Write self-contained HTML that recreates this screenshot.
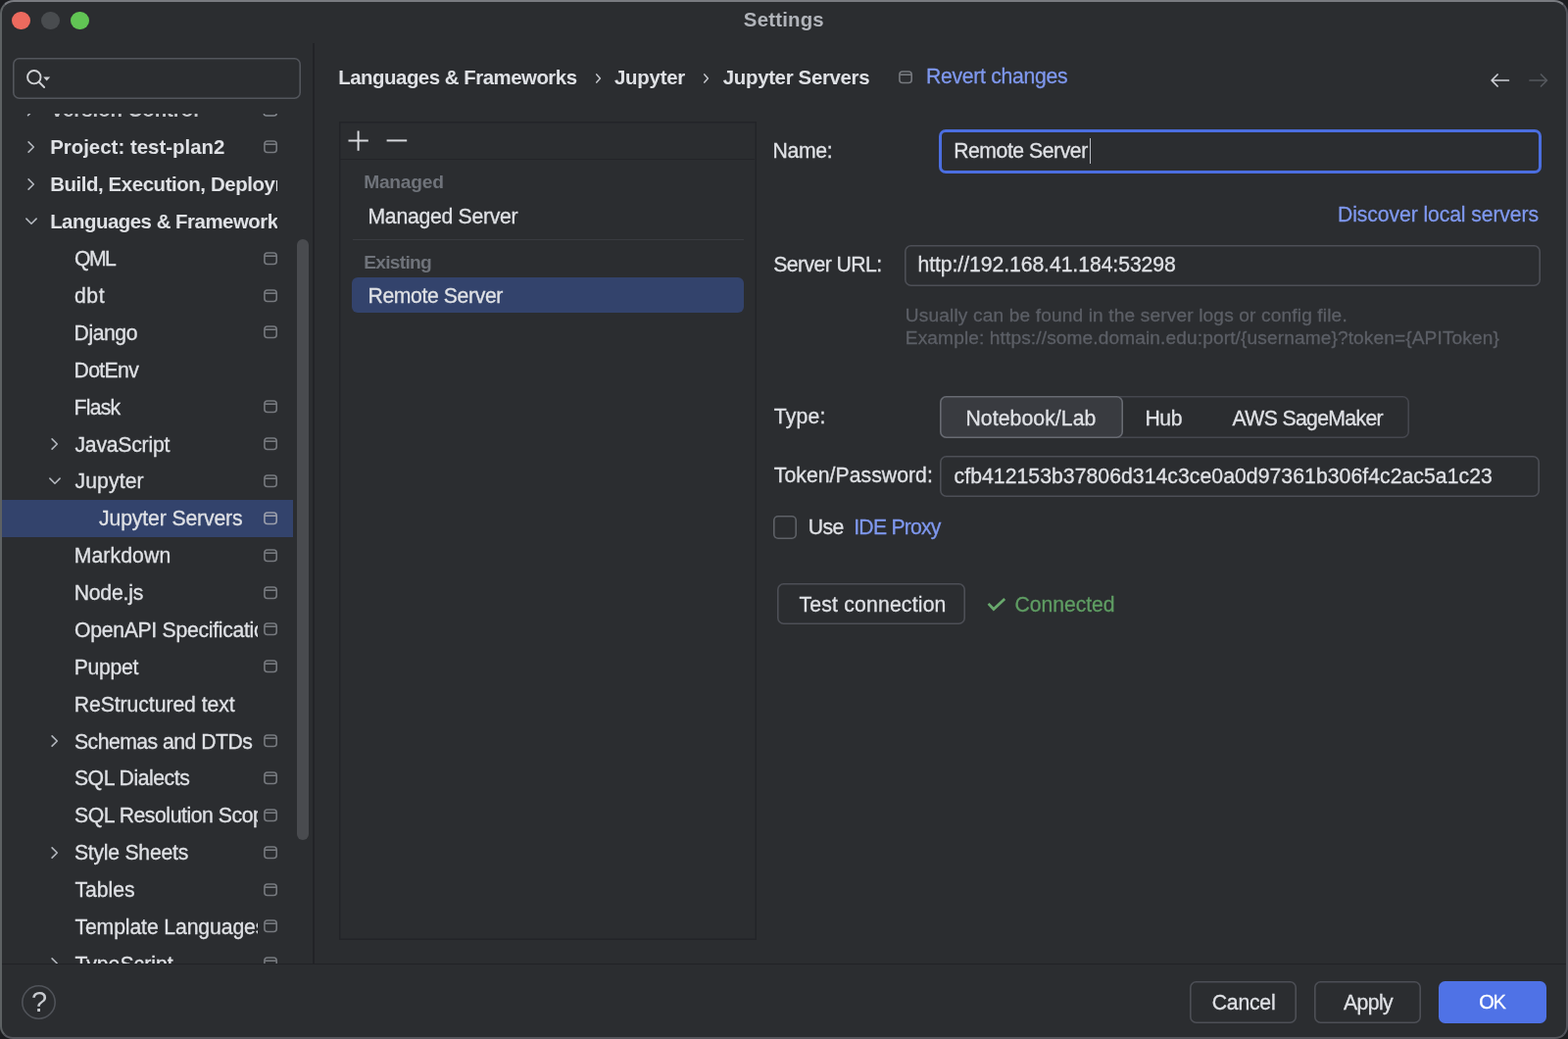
<!DOCTYPE html>
<html lang="en"><head><meta charset="utf-8"><title>Settings</title>
<style>
html,body{margin:0;padding:0;}
body{width:1600px;height:1060px;overflow:hidden;background:#1c1d20;font-family:"Liberation Sans",sans-serif;position:relative;}
.win{position:absolute;left:0;top:0;width:1600px;height:1060px;box-sizing:border-box;background:#2b2d30;border:2px solid #5d6163;border-top-color:#797b80;border-right-color:#52535b;border-bottom-color:#55565c;border-radius:14px 14px 13px 13px;overflow:hidden;}
.abs{position:absolute;box-sizing:border-box;}
.t{position:absolute;white-space:nowrap;line-height:30px;height:30px;display:block;}
.tl{position:absolute;left:0;top:0;width:1600px;height:1060px;will-change:transform;}
.pi{position:absolute;overflow:visible;}
.dot{position:absolute;width:18.8px;height:18.8px;border-radius:50%;top:11.6px;}
.inp{position:absolute;box-sizing:border-box;border-radius:6.5px;background:#2b2d30;box-shadow:inset 0 0 0 1.6px var(--bc,#4d4f56);}
.btn{position:absolute;box-sizing:border-box;border-radius:6.5px;box-shadow:inset 0 0 0 1.6px #4d4f56;}
</style></head>
<body>
<div class="win"></div>
<!-- sidebar bg -->
<div class="abs" style="left:2px;top:44px;width:319px;height:939px;background:#2b2d30"></div>
<!-- traffic lights -->
<div class="dot" style="left:11.9px;background:#ec6a5e"></div>
<div class="dot" style="left:42px;background:#494c4f"></div>
<div class="dot" style="left:72.2px;background:#61c554"></div>
<!-- search -->
<div class="inp" style="left:12.5px;top:59.3px;width:294.7px;height:41.5px;--bc:#53565c"></div>
<svg class="pi" style="left:24px;top:68px" width="32" height="24" viewBox="0 0 32 24"><circle cx="10.8" cy="10.7" r="6.7" fill="none" stroke="#d0d2d5" stroke-width="1.9"/><path d="M15.6 15.5L21.1 21" stroke="#d0d2d5" stroke-width="1.9" stroke-linecap="round"/><path d="M20.2 10.5h7l-3.5 4.1z" fill="#d0d2d5"/></svg>
<!-- selected tree row -->
<div class="abs" style="left:2px;top:510px;width:296.5px;height:38px;background:#33436c"></div>
<!-- clipped Version Control row -->
<div class="abs" style="left:2px;top:115.8px;width:300px;height:7px;overflow:hidden;will-change:transform">
 <span class="t" style="left:49.6px;top:-18.54px;font-size:20.4px;font-weight:bold;letter-spacing:-0.04px;color:#c5c7cb">Version Control</span>
 <svg class="pi" style="left:266px;top:-10.24px" width="16" height="14" viewBox="0 0 16 14"><rect x="1.25" y="1.25" width="13" height="10.8" rx="2.6" fill="none" stroke="#868a91" stroke-width="1.5"/></svg>
 <svg class="pi" style="left:24.9px;top:-10.54px" width="10" height="14" viewBox="0 0 10 14"><path d="M1.6 1.4L7.6 7L1.6 12.6" fill="none" stroke="#b4b8bf" stroke-width="1.6" stroke-linecap="round" stroke-linejoin="round"/></svg>
</div>
<svg class="pi" style="left:268px;top:143.13px" width="16" height="14" viewBox="0 0 16 14"><rect x="1.9" y="1.05" width="12.3" height="11.4" rx="3" fill="none" stroke="#76797e" stroke-width="1.6"/><path d="M2.2 4.2H13.9" stroke="#76797e" stroke-width="1.6" fill="none"/></svg>
<svg class="pi" style="left:26.9px;top:143.13px" width="10" height="14" viewBox="0 0 10 14"><path d="M2.1 1.9L7.3 7L2.1 12.1" fill="none" stroke="#b4b8bf" stroke-width="1.6" stroke-linecap="round" stroke-linejoin="round"/></svg>
<svg class="pi" style="left:26.9px;top:181.0px" width="10" height="14" viewBox="0 0 10 14"><path d="M2.1 1.9L7.3 7L2.1 12.1" fill="none" stroke="#b4b8bf" stroke-width="1.6" stroke-linecap="round" stroke-linejoin="round"/></svg>
<svg class="pi" style="left:24.5px;top:221.28px" width="14" height="10" viewBox="0 0 14 10"><path d="M1.9 2.1L7 7.3L12.1 2.1" fill="none" stroke="#b4b8bf" stroke-width="1.6" stroke-linecap="round" stroke-linejoin="round"/></svg>
<svg class="pi" style="left:268px;top:256.74px" width="16" height="14" viewBox="0 0 16 14"><rect x="1.9" y="1.05" width="12.3" height="11.4" rx="3" fill="none" stroke="#76797e" stroke-width="1.6"/><path d="M2.2 4.2H13.9" stroke="#76797e" stroke-width="1.6" fill="none"/></svg>
<svg class="pi" style="left:268px;top:294.61px" width="16" height="14" viewBox="0 0 16 14"><rect x="1.9" y="1.05" width="12.3" height="11.4" rx="3" fill="none" stroke="#76797e" stroke-width="1.6"/><path d="M2.2 4.2H13.9" stroke="#76797e" stroke-width="1.6" fill="none"/></svg>
<svg class="pi" style="left:268px;top:332.48px" width="16" height="14" viewBox="0 0 16 14"><rect x="1.9" y="1.05" width="12.3" height="11.4" rx="3" fill="none" stroke="#76797e" stroke-width="1.6"/><path d="M2.2 4.2H13.9" stroke="#76797e" stroke-width="1.6" fill="none"/></svg>
<svg class="pi" style="left:268px;top:408.22px" width="16" height="14" viewBox="0 0 16 14"><rect x="1.9" y="1.05" width="12.3" height="11.4" rx="3" fill="none" stroke="#76797e" stroke-width="1.6"/><path d="M2.2 4.2H13.9" stroke="#76797e" stroke-width="1.6" fill="none"/></svg>
<svg class="pi" style="left:268px;top:446.09px" width="16" height="14" viewBox="0 0 16 14"><rect x="1.9" y="1.05" width="12.3" height="11.4" rx="3" fill="none" stroke="#76797e" stroke-width="1.6"/><path d="M2.2 4.2H13.9" stroke="#76797e" stroke-width="1.6" fill="none"/></svg>
<svg class="pi" style="left:50.9px;top:446.09px" width="10" height="14" viewBox="0 0 10 14"><path d="M2.1 1.9L7.3 7L2.1 12.1" fill="none" stroke="#b4b8bf" stroke-width="1.6" stroke-linecap="round" stroke-linejoin="round"/></svg>
<svg class="pi" style="left:268px;top:483.96px" width="16" height="14" viewBox="0 0 16 14"><rect x="1.9" y="1.05" width="12.3" height="11.4" rx="3" fill="none" stroke="#76797e" stroke-width="1.6"/><path d="M2.2 4.2H13.9" stroke="#76797e" stroke-width="1.6" fill="none"/></svg>
<svg class="pi" style="left:48.5px;top:486.36px" width="14" height="10" viewBox="0 0 14 10"><path d="M1.9 2.1L7 7.3L12.1 2.1" fill="none" stroke="#b4b8bf" stroke-width="1.6" stroke-linecap="round" stroke-linejoin="round"/></svg>
<svg class="pi" style="left:268px;top:521.83px" width="16" height="14" viewBox="0 0 16 14"><rect x="1.9" y="1.05" width="12.3" height="11.4" rx="3" fill="none" stroke="#9a9eab" stroke-width="1.6"/><path d="M2.2 4.2H13.9" stroke="#9a9eab" stroke-width="1.6" fill="none"/></svg>
<svg class="pi" style="left:268px;top:559.7px" width="16" height="14" viewBox="0 0 16 14"><rect x="1.9" y="1.05" width="12.3" height="11.4" rx="3" fill="none" stroke="#76797e" stroke-width="1.6"/><path d="M2.2 4.2H13.9" stroke="#76797e" stroke-width="1.6" fill="none"/></svg>
<svg class="pi" style="left:268px;top:597.57px" width="16" height="14" viewBox="0 0 16 14"><rect x="1.9" y="1.05" width="12.3" height="11.4" rx="3" fill="none" stroke="#76797e" stroke-width="1.6"/><path d="M2.2 4.2H13.9" stroke="#76797e" stroke-width="1.6" fill="none"/></svg>
<svg class="pi" style="left:268px;top:635.44px" width="16" height="14" viewBox="0 0 16 14"><rect x="1.9" y="1.05" width="12.3" height="11.4" rx="3" fill="none" stroke="#76797e" stroke-width="1.6"/><path d="M2.2 4.2H13.9" stroke="#76797e" stroke-width="1.6" fill="none"/></svg>
<svg class="pi" style="left:268px;top:673.31px" width="16" height="14" viewBox="0 0 16 14"><rect x="1.9" y="1.05" width="12.3" height="11.4" rx="3" fill="none" stroke="#76797e" stroke-width="1.6"/><path d="M2.2 4.2H13.9" stroke="#76797e" stroke-width="1.6" fill="none"/></svg>
<svg class="pi" style="left:268px;top:749.05px" width="16" height="14" viewBox="0 0 16 14"><rect x="1.9" y="1.05" width="12.3" height="11.4" rx="3" fill="none" stroke="#76797e" stroke-width="1.6"/><path d="M2.2 4.2H13.9" stroke="#76797e" stroke-width="1.6" fill="none"/></svg>
<svg class="pi" style="left:50.9px;top:749.05px" width="10" height="14" viewBox="0 0 10 14"><path d="M2.1 1.9L7.3 7L2.1 12.1" fill="none" stroke="#b4b8bf" stroke-width="1.6" stroke-linecap="round" stroke-linejoin="round"/></svg>
<svg class="pi" style="left:268px;top:786.92px" width="16" height="14" viewBox="0 0 16 14"><rect x="1.9" y="1.05" width="12.3" height="11.4" rx="3" fill="none" stroke="#76797e" stroke-width="1.6"/><path d="M2.2 4.2H13.9" stroke="#76797e" stroke-width="1.6" fill="none"/></svg>
<svg class="pi" style="left:268px;top:824.79px" width="16" height="14" viewBox="0 0 16 14"><rect x="1.9" y="1.05" width="12.3" height="11.4" rx="3" fill="none" stroke="#76797e" stroke-width="1.6"/><path d="M2.2 4.2H13.9" stroke="#76797e" stroke-width="1.6" fill="none"/></svg>
<svg class="pi" style="left:268px;top:862.66px" width="16" height="14" viewBox="0 0 16 14"><rect x="1.9" y="1.05" width="12.3" height="11.4" rx="3" fill="none" stroke="#76797e" stroke-width="1.6"/><path d="M2.2 4.2H13.9" stroke="#76797e" stroke-width="1.6" fill="none"/></svg>
<svg class="pi" style="left:50.9px;top:862.66px" width="10" height="14" viewBox="0 0 10 14"><path d="M2.1 1.9L7.3 7L2.1 12.1" fill="none" stroke="#b4b8bf" stroke-width="1.6" stroke-linecap="round" stroke-linejoin="round"/></svg>
<svg class="pi" style="left:268px;top:900.53px" width="16" height="14" viewBox="0 0 16 14"><rect x="1.9" y="1.05" width="12.3" height="11.4" rx="3" fill="none" stroke="#76797e" stroke-width="1.6"/><path d="M2.2 4.2H13.9" stroke="#76797e" stroke-width="1.6" fill="none"/></svg>
<svg class="pi" style="left:268px;top:938.4px" width="16" height="14" viewBox="0 0 16 14"><rect x="1.9" y="1.05" width="12.3" height="11.4" rx="3" fill="none" stroke="#76797e" stroke-width="1.6"/><path d="M2.2 4.2H13.9" stroke="#76797e" stroke-width="1.6" fill="none"/></svg>
<svg class="pi" style="left:268px;top:976.27px" width="16" height="14" viewBox="0 0 16 14"><rect x="1.9" y="1.05" width="12.3" height="11.4" rx="3" fill="none" stroke="#76797e" stroke-width="1.6"/><path d="M2.2 4.2H13.9" stroke="#76797e" stroke-width="1.6" fill="none"/></svg>
<svg class="pi" style="left:50.9px;top:976.27px" width="10" height="14" viewBox="0 0 10 14"><path d="M2.1 1.9L7.3 7L2.1 12.1" fill="none" stroke="#b4b8bf" stroke-width="1.6" stroke-linecap="round" stroke-linejoin="round"/></svg>
<div class="tl">
<span class="t" id="t0" style="left:51.15px;top:135px;font-size:20.4px;color:#dfe1e5;font-weight:bold;letter-spacing:0.017px;">Project: test-plan2</span>
<span class="t" id="t1" style="left:51.15px;top:173px;font-size:20.4px;color:#dfe1e5;font-weight:bold;letter-spacing:-0.407px;width:232.05px;overflow:hidden;">Build, Execution, Deployment</span>
<span class="t" id="t2" style="left:51.15px;top:211px;font-size:20.4px;color:#dfe1e5;font-weight:bold;letter-spacing:-0.479px;width:232.05px;overflow:hidden;">Languages &amp; Frameworks</span>
<span class="t" id="t3" style="left:75.95px;top:249px;font-size:21.2px;color:#dfe1e5;-webkit-text-stroke:0.3px;letter-spacing:-1.475px;">QML</span>
<span class="t" id="t4" style="left:75.95px;top:287px;font-size:21.2px;color:#dfe1e5;-webkit-text-stroke:0.3px;letter-spacing:0.625px;">dbt</span>
<span class="t" id="t5" style="left:75.6px;top:325px;font-size:21.2px;color:#dfe1e5;-webkit-text-stroke:0.3px;letter-spacing:-0.46px;">Django</span>
<span class="t" id="t6" style="left:75.6px;top:363px;font-size:21.2px;color:#dfe1e5;-webkit-text-stroke:0.3px;letter-spacing:-0.66px;">DotEnv</span>
<span class="t" id="t7" style="left:75.6px;top:401px;font-size:21.2px;color:#dfe1e5;-webkit-text-stroke:0.3px;letter-spacing:-0.762px;">Flask</span>
<span class="t" id="t8" style="left:76.45px;top:439px;font-size:21.2px;color:#dfe1e5;-webkit-text-stroke:0.3px;letter-spacing:-0.217px;">JavaScript</span>
<span class="t" id="t9" style="left:76.45px;top:476px;font-size:21.2px;color:#dfe1e5;-webkit-text-stroke:0.3px;letter-spacing:0.117px;">Jupyter</span>
<span class="t" id="t10" style="left:101.05px;top:514px;font-size:21.2px;color:#dfe1e5;-webkit-text-stroke:0.3px;letter-spacing:-0.129px;">Jupyter Servers</span>
<span class="t" id="t11" style="left:75.7px;top:552px;font-size:21.2px;color:#dfe1e5;-webkit-text-stroke:0.3px;letter-spacing:0.114px;">Markdown</span>
<span class="t" id="t12" style="left:75.7px;top:590px;font-size:21.2px;color:#dfe1e5;-webkit-text-stroke:0.3px;letter-spacing:-0.208px;">Node.js</span>
<span class="t" id="t13" style="left:75.95px;top:628px;font-size:21.2px;color:#dfe1e5;-webkit-text-stroke:0.3px;letter-spacing:-0.283px;width:187.45px;overflow:hidden;">OpenAPI Specifications</span>
<span class="t" id="t14" style="left:75.7px;top:666px;font-size:21.2px;color:#dfe1e5;-webkit-text-stroke:0.3px;letter-spacing:-0.27px;">Puppet</span>
<span class="t" id="t15" style="left:75.7px;top:704px;font-size:21.2px;color:#dfe1e5;-webkit-text-stroke:0.3px;letter-spacing:-0.056px;">ReStructured text</span>
<span class="t" id="t16" style="left:75.95px;top:742px;font-size:21.2px;color:#dfe1e5;-webkit-text-stroke:0.3px;letter-spacing:-0.517px;">Schemas and DTDs</span>
<span class="t" id="t17" style="left:75.95px;top:779px;font-size:21.2px;color:#dfe1e5;-webkit-text-stroke:0.3px;letter-spacing:-0.455px;">SQL Dialects</span>
<span class="t" id="t18" style="left:75.95px;top:817px;font-size:21.2px;color:#dfe1e5;-webkit-text-stroke:0.3px;letter-spacing:-0.441px;width:187.45px;overflow:hidden;">SQL Resolution Scopes</span>
<span class="t" id="t19" style="left:75.95px;top:855px;font-size:21.2px;color:#dfe1e5;-webkit-text-stroke:0.3px;letter-spacing:-0.241px;">Style Sheets</span>
<span class="t" id="t20" style="left:76.45px;top:893px;font-size:21.2px;color:#dfe1e5;-webkit-text-stroke:0.3px;letter-spacing:-0.02px;">Tables</span>
<span class="t" id="t21" style="left:76.45px;top:931px;font-size:21.2px;color:#dfe1e5;-webkit-text-stroke:0.3px;letter-spacing:-0.106px;width:186.95px;overflow:hidden;">Template Languages</span>
<span class="t" id="t22" style="left:76.45px;top:969px;font-size:21.2px;color:#dfe1e5;-webkit-text-stroke:0.3px;letter-spacing:0.006px;">TypeScript</span>
</div>
<div class="abs" style="left:2px;top:982.7px;width:319px;height:22px;background:#2b2d30"></div>
<!-- scrollbar -->
<div class="abs" style="left:303px;top:244px;width:12px;height:613px;border-radius:6px;background:#494b4f"></div>
<!-- sidebar divider -->
<div class="abs" style="left:319.4px;top:44px;width:1.5px;height:939.5px;background:#222327"></div>
<!-- breadcrumb chevrons -->
<svg class="pi" style="left:606.8px;top:74.1px" width="8" height="12" viewBox="0 0 8 12"><path d="M1.8 1.9L5.4 6L1.8 10.1" fill="none" stroke="#c3c6cb" stroke-width="1.5" stroke-linecap="round" stroke-linejoin="round"/></svg>
<svg class="pi" style="left:717.4px;top:74.1px" width="8" height="12" viewBox="0 0 8 12"><path d="M1.8 1.9L5.4 6L1.8 10.1" fill="none" stroke="#c3c6cb" stroke-width="1.5" stroke-linecap="round" stroke-linejoin="round"/></svg>
<svg class="pi" style="left:915.9px;top:72.05px" width="16" height="14" viewBox="0 0 16 14"><rect x="1.9" y="1.05" width="12.3" height="11.4" rx="3" fill="none" stroke="#76797e" stroke-width="1.6"/><path d="M2.2 4.2H13.9" stroke="#76797e" stroke-width="1.6" fill="none"/></svg>
<!-- nav arrows -->
<svg class="pi" style="left:1519px;top:72px" width="24" height="20" viewBox="0 0 24 20"><path d="M20.4 10H3.2M9.1 4L3.1 10L9.1 16" fill="none" stroke="#ced0d6" stroke-width="1.7" stroke-linecap="round" stroke-linejoin="round"/></svg>
<svg class="pi" style="left:1558px;top:72px" width="24" height="20" viewBox="0 0 24 20"><path d="M3 10H20.4M14.5 4L20.5 10L14.5 16" fill="none" stroke="#55585e" stroke-width="1.7" stroke-linecap="round" stroke-linejoin="round"/></svg>
<!-- list panel -->
<div class="abs" style="left:345.5px;top:123.8px;width:426.3px;height:835px;box-shadow:inset 0 0 0 1.5px #232428;background:#2b2d30"></div>
<div class="abs" style="left:346.8px;top:161.6px;width:423.5px;height:1.5px;background:#232428"></div>
<svg class="pi" style="left:355px;top:132.5px" width="22" height="22" viewBox="0 0 22 22"><path d="M10.6 0.6v20.1M0.5 10.4h20.3" stroke="#d6d8dc" stroke-width="2" fill="none"/></svg>
<svg class="pi" style="left:394px;top:132.5px" width="22" height="22" viewBox="0 0 22 22"><path d="M0.6 10.4h20.6" stroke="#d6d8dc" stroke-width="2" fill="none"/></svg>
<div class="abs" style="left:360px;top:243.7px;width:398.5px;height:1.5px;background:#393b40"></div>
<div class="abs" style="left:358.8px;top:283.4px;width:400px;height:36px;border-radius:6px;background:#33436c"></div>
<!-- form inputs -->
<div class="abs" style="left:958.2px;top:131.6px;width:615px;height:45.6px;border:3.4px solid #4b6ee0;border-radius:7px;background:#2b2d30"></div>
<div class="abs" style="left:1111.6px;top:140.6px;width:1.6px;height:26px;background:#b9bcc2"></div>
<div class="inp" style="left:923.2px;top:249.8px;width:648.5px;height:42.2px"></div>
<div class="inp" style="left:959.2px;top:403.8px;width:479px;height:43px;--bc:#45474e"></div>
<div class="inp" style="left:959.2px;top:403.8px;width:186.6px;height:43px;--bc:#686b72;background:#393b40"></div>
<div class="inp" style="left:959.2px;top:465.1px;width:612.1px;height:41.5px"></div>
<div class="abs" style="left:788.6px;top:526px;width:24.4px;height:23.8px;box-shadow:inset 0 0 0 1.6px #5e6167;border-radius:5px"></div>
<div class="btn" style="left:793.2px;top:595.1px;width:192px;height:42.4px"></div>
<svg class="pi" style="left:1006px;top:606px" width="22" height="20" viewBox="0 0 22 20"><path d="M2.6 9.9L7.9 15.5L19.2 4.9" fill="none" stroke="#69a96d" stroke-width="2.7"/></svg>
<!-- bottom bar -->
<div class="abs" style="left:2px;top:982.5px;width:1596px;height:1.5px;background:#212226"></div>
<div class="abs" style="left:21.5px;top:1004.5px;width:35px;height:35px;box-shadow:inset 0 0 0 1.6px #505359;border-radius:50%"></div>
<div class="btn" style="left:1213.8px;top:1000.8px;width:109.5px;height:43px"></div>
<div class="btn" style="left:1341px;top:1000.8px;width:109px;height:43px"></div>
<div class="btn" style="left:1467.8px;top:1000.8px;width:110px;height:43.2px;box-shadow:none;background:#4f72e6"></div>
<div class="tl">
<span class="t" id="t23" style="left:758.85px;top:5px;font-size:20.4px;color:#b1b4ba;font-weight:bold;letter-spacing:0.193px;">Settings</span>
<span class="t" id="t24" style="left:345.25px;top:64px;font-size:20.4px;color:#dfe1e5;font-weight:bold;letter-spacing:-0.479px;">Languages &amp; Frameworks</span>
<span class="t" id="t25" style="left:626.95px;top:64px;font-size:20.4px;color:#dfe1e5;font-weight:bold;letter-spacing:-0.225px;">Jupyter</span>
<span class="t" id="t26" style="left:737.85px;top:64px;font-size:20.4px;color:#dfe1e5;font-weight:bold;letter-spacing:-0.321px;">Jupyter Servers</span>
<span class="t" id="t27" style="left:944.95px;top:63px;font-size:21.2px;color:#7f98ee;-webkit-text-stroke:0.3px;letter-spacing:-0.292px;">Revert changes</span>
<span class="t" id="t28" style="left:371.2px;top:171px;font-size:19.2px;color:#6f737a;font-weight:bold;letter-spacing:-0.25px;">Managed</span>
<span class="t" id="t29" style="left:375.5px;top:206px;font-size:21.2px;color:#dfe1e5;-webkit-text-stroke:0.3px;letter-spacing:-0.277px;">Managed Server</span>
<span class="t" id="t30" style="left:371.2px;top:253px;font-size:19.2px;color:#6f737a;font-weight:bold;letter-spacing:-0.714px;">Existing</span>
<span class="t" id="t31" style="left:375.5px;top:287px;font-size:21.2px;color:#dfe1e5;-webkit-text-stroke:0.3px;letter-spacing:-0.387px;">Remote Server</span>
<span class="t" id="t32" style="left:788.5px;top:139px;font-size:21.2px;color:#dfe1e5;-webkit-text-stroke:0.3px;letter-spacing:-0.287px;">Name:</span>
<span class="t" id="t33" style="left:973.2px;top:139px;font-size:21.2px;color:#dfe1e5;-webkit-text-stroke:0.3px;letter-spacing:-0.454px;">Remote Server</span>
<span class="t" id="t34" style="left:1365.0px;top:204px;font-size:21.2px;color:#7f98ee;-webkit-text-stroke:0.3px;letter-spacing:-0.102px;">Discover local servers</span>
<span class="t" id="t35" style="left:789.25px;top:255px;font-size:21.2px;color:#dfe1e5;-webkit-text-stroke:0.3px;letter-spacing:-0.56px;">Server URL:</span>
<span class="t" id="t36" style="left:936.45px;top:255px;font-size:21.2px;color:#dfe1e5;-webkit-text-stroke:0.3px;letter-spacing:-0.065px;">http://192.168.41.184:53298</span>
<span class="t" id="t37" style="left:923.85px;top:307px;font-size:19.1px;color:#5c5f66;-webkit-text-stroke:0.3px;letter-spacing:0.153px;">Usually can be found in the server logs or config file.</span>
<span class="t" id="t38" style="left:923.85px;top:330px;font-size:19.1px;color:#5c5f66;-webkit-text-stroke:0.3px;letter-spacing:0.123px;">Example: https://some.domain.edu:port/{username}?token={APIToken}</span>
<span class="t" id="t39" style="left:789.75px;top:410px;font-size:21.2px;color:#dfe1e5;-webkit-text-stroke:0.3px;letter-spacing:0.213px;">Type:</span>
<span class="t" id="t40" style="left:985.4px;top:412px;font-size:21.2px;color:#dfe1e5;-webkit-text-stroke:0.3px;letter-spacing:0.095px;">Notebook/Lab</span>
<span class="t" id="t41" style="left:1168.4px;top:412px;font-size:21.2px;color:#dfe1e5;-webkit-text-stroke:0.3px;letter-spacing:-0.425px;">Hub</span>
<span class="t" id="t42" style="left:1257.6px;top:412px;font-size:21.2px;color:#dfe1e5;-webkit-text-stroke:0.3px;letter-spacing:-0.642px;">AWS SageMaker</span>
<span class="t" id="t43" style="left:789.75px;top:470px;font-size:21.2px;color:#dfe1e5;-webkit-text-stroke:0.3px;letter-spacing:0.054px;">Token/Password:</span>
<span class="t" id="t44" style="left:973.55px;top:471px;font-size:21.2px;color:#dfe1e5;-webkit-text-stroke:0.3px;letter-spacing:0.054px;">cfb412153b37806d314c3ce0a0d97361b306f4c2ac5a1c23</span>
<span class="t" id="t45" style="left:824.7px;top:523px;font-size:21.2px;color:#dfe1e5;-webkit-text-stroke:0.3px;letter-spacing:-0.5px;">Use</span>
<span class="t" id="t46" style="left:871.25px;top:523px;font-size:21.2px;color:#7f98ee;-webkit-text-stroke:0.3px;letter-spacing:-0.769px;">IDE Proxy</span>
<span class="t" id="t47" style="left:815.45px;top:602px;font-size:21.2px;color:#dfe1e5;-webkit-text-stroke:0.3px;letter-spacing:0.196px;">Test connection</span>
<span class="t" id="t48" style="left:1035.6px;top:602px;font-size:21.2px;color:#5f9d63;-webkit-text-stroke:0.3px;letter-spacing:-0.056px;">Connected</span>
<span class="t" id="t49" style="left:1236.8px;top:1008px;font-size:21.2px;color:#dfe1e5;-webkit-text-stroke:0.3px;letter-spacing:-0.23px;">Cancel</span>
<span class="t" id="t50" style="left:1370.9px;top:1008px;font-size:21.2px;color:#dfe1e5;-webkit-text-stroke:0.3px;letter-spacing:-0.55px;">Apply</span>
<span class="t" id="t51" style="left:1509.25px;top:1007px;font-size:20px;color:#ffffff;-webkit-text-stroke:0.3px;letter-spacing:-1.35px;">OK</span>
<span class="t" id="t52" style="left:32.05px;top:1007px;font-size:29px;color:#c9ccd1;letter-spacing:-0.95px;">?</span>
</div>
</body></html>
